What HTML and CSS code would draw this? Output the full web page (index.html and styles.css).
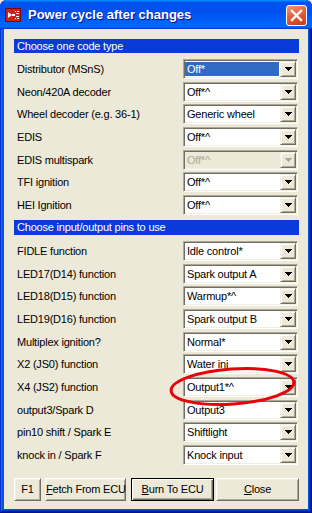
FILE: index.html
```html
<!DOCTYPE html>
<html lang="en">
<head>
    <meta charset="UTF-8">
    <meta name="viewport" content="width=device-width, initial-scale=1.0">
    <title>Power cycle after changes</title>
    <link rel="stylesheet" href="styles.css">
</head>
<body>

<div class="window">
    <div class="titlebar">
        <svg class="app-icon" width="16" height="16" viewBox="0 0 16 16">
            <rect x="0.5" y="1.5" width="15" height="13" fill="#c8231d" stroke="#6b0a06"/>
            <path d="M3 5l4 3-4 3z" fill="#fff"/>
            <path d="M7 7h3v2H7z M10 4h1v1h-1z M12 4h2v1h-2z M11 6h3v1h-3z M11 9h3v1h-3z M10 11h1v1h-1z M12 11h2v1h-2z" fill="#fff"/>
        </svg>
        <span class="title">Power cycle after changes</span>
        <div class="close-btn">
            <svg width="19" height="19" viewBox="0 0 19 19">
                <path d="M5 5l9 9M14 5l-9 9" stroke="#fff" stroke-width="2.4" stroke-linecap="square"/>
            </svg>
        </div>
    </div>

    <div class="client">
        <div class="section-head">Choose one code type</div>

        <div class="row">
            <span class="label">Distributor (MSnS)</span>
            <div class="combo focused"><span class="value">Off*</span><span class="drop"><svg width="7" height="4"><path d="M0 0h7v1H0zM1 1h5v1H1zM2 2h3v1H2zM3 3h1v1H3z"/></svg></span></div>
        </div>
        <div class="row">
            <span class="label">Neon/420A decoder</span>
            <div class="combo"><span class="value">Off*^</span><span class="drop"><svg width="7" height="4"><path d="M0 0h7v1H0zM1 1h5v1H1zM2 2h3v1H2zM3 3h1v1H3z"/></svg></span></div>
        </div>
        <div class="row">
            <span class="label">Wheel decoder (e.g. 36-1)</span>
            <div class="combo"><span class="value">Generic wheel</span><span class="drop"><svg width="7" height="4"><path d="M0 0h7v1H0zM1 1h5v1H1zM2 2h3v1H2zM3 3h1v1H3z"/></svg></span></div>
        </div>
        <div class="row">
            <span class="label">EDIS</span>
            <div class="combo"><span class="value">Off*^</span><span class="drop"><svg width="7" height="4"><path d="M0 0h7v1H0zM1 1h5v1H1zM2 2h3v1H2zM3 3h1v1H3z"/></svg></span></div>
        </div>
        <div class="row">
            <span class="label">EDIS multispark</span>
            <div class="combo disabled"><span class="value">Off*^</span><span class="drop"><svg width="7" height="4"><path d="M0 0h7v1H0zM1 1h5v1H1zM2 2h3v1H2zM3 3h1v1H3z"/></svg></span></div>
        </div>
        <div class="row">
            <span class="label">TFI ignition</span>
            <div class="combo"><span class="value">Off*^</span><span class="drop"><svg width="7" height="4"><path d="M0 0h7v1H0zM1 1h5v1H1zM2 2h3v1H2zM3 3h1v1H3z"/></svg></span></div>
        </div>
        <div class="row">
            <span class="label">HEI Ignition</span>
            <div class="combo"><span class="value">Off*^</span><span class="drop"><svg width="7" height="4"><path d="M0 0h7v1H0zM1 1h5v1H1zM2 2h3v1H2zM3 3h1v1H3z"/></svg></span></div>
        </div>

        <div class="section-head second">Choose input/output pins to use</div>

        <div class="row">
            <span class="label">FIDLE function</span>
            <div class="combo"><span class="value">Idle control*</span><span class="drop"><svg width="7" height="4"><path d="M0 0h7v1H0zM1 1h5v1H1zM2 2h3v1H2zM3 3h1v1H3z"/></svg></span></div>
        </div>
        <div class="row">
            <span class="label">LED17(D14) function</span>
            <div class="combo"><span class="value">Spark output A</span><span class="drop"><svg width="7" height="4"><path d="M0 0h7v1H0zM1 1h5v1H1zM2 2h3v1H2zM3 3h1v1H3z"/></svg></span></div>
        </div>
        <div class="row">
            <span class="label">LED18(D15) function</span>
            <div class="combo"><span class="value">Warmup*^</span><span class="drop"><svg width="7" height="4"><path d="M0 0h7v1H0zM1 1h5v1H1zM2 2h3v1H2zM3 3h1v1H3z"/></svg></span></div>
        </div>
        <div class="row">
            <span class="label">LED19(D16) function</span>
            <div class="combo"><span class="value">Spark output B</span><span class="drop"><svg width="7" height="4"><path d="M0 0h7v1H0zM1 1h5v1H1zM2 2h3v1H2zM3 3h1v1H3z"/></svg></span></div>
        </div>
        <div class="row">
            <span class="label">Multiplex ignition?</span>
            <div class="combo"><span class="value">Normal*</span><span class="drop"><svg width="7" height="4"><path d="M0 0h7v1H0zM1 1h5v1H1zM2 2h3v1H2zM3 3h1v1H3z"/></svg></span></div>
        </div>
        <div class="row">
            <span class="label">X2 (JS0) function</span>
            <div class="combo"><span class="value">Water inj</span><span class="drop"><svg width="7" height="4"><path d="M0 0h7v1H0zM1 1h5v1H1zM2 2h3v1H2zM3 3h1v1H3z"/></svg></span></div>
        </div>
        <div class="row">
            <span class="label">X4 (JS2) function</span>
            <div class="combo"><span class="value">Output1*^</span><span class="drop"><svg width="7" height="4"><path d="M0 0h7v1H0zM1 1h5v1H1zM2 2h3v1H2zM3 3h1v1H3z"/></svg></span></div>
        </div>
        <div class="row">
            <span class="label">output3/Spark D</span>
            <div class="combo"><span class="value">Output3</span><span class="drop"><svg width="7" height="4"><path d="M0 0h7v1H0zM1 1h5v1H1zM2 2h3v1H2zM3 3h1v1H3z"/></svg></span></div>
        </div>
        <div class="row">
            <span class="label">pin10 shift / Spark E</span>
            <div class="combo"><span class="value">Shiftlight</span><span class="drop"><svg width="7" height="4"><path d="M0 0h7v1H0zM1 1h5v1H1zM2 2h3v1H2zM3 3h1v1H3z"/></svg></span></div>
        </div>
        <div class="row">
            <span class="label">knock in / Spark F</span>
            <div class="combo"><span class="value">Knock input</span><span class="drop"><svg width="7" height="4"><path d="M0 0h7v1H0zM1 1h5v1H1zM2 2h3v1H2zM3 3h1v1H3z"/></svg></span></div>
        </div>

        <div class="buttons">
            <div class="btn btn-f1">F1</div>
            <div class="btn btn-fetch"><u>F</u>etch From ECU</div>
            <div class="btn btn-burn default"><u>B</u>urn To ECU</div>
            <div class="btn btn-close"><u>C</u>lose</div>
        </div>
    </div>

    <!-- red hand-drawn mark over the X4 combo -->
    <svg class="mark" width="134" height="50" viewBox="0 0 134 50">
        <ellipse cx="66.5" cy="24.5" rx="61.5" ry="17.5" fill="none" stroke="#e8000b" stroke-width="3" transform="rotate(-4 66.5 24.5)"/>
    </svg>
</div>

</body>
</html>
```

FILE: styles.css
```css
body {
    margin: 0;
    background-color: #f3e4e4;
    font-family: "Liberation Sans", Arial, sans-serif;
    font-size: 11px;
    letter-spacing: -0.2px;
    color: #000;
}

.window {
    position: relative;
    width: 312px;
    height: 513px;
    display: flex;
    flex-direction: column;
    background-color: #0054e3;
    border-radius: 7px 7px 0 0;
    box-shadow: inset -1px -1px #00138c, inset 1px 1px #0831d9, inset -2px -2px #001ea0, inset 2px 2px #166aee, inset -3px -3px #003bda, inset 3px 3px #0855dd;
}

.titlebar {
    height: 29px;
    display: flex;
    align-items: center;
    padding: 0 5px;
    border-radius: 7px 7px 0 0;
    background: linear-gradient(180deg, #0997ff, #0053ee 8%, #0050ee 40%, #06f 88%, #06f 93%, #005bff 95%, #003dd7 96%, #003dd7);
}

.app-icon {
    flex-shrink: 0;
}

.title {
    margin-left: 7px;
    color: #fff;
    font-weight: bold;
    font-size: 13px;
    letter-spacing: 0;
    text-shadow: 1px 1px #0f1089;
}

.close-btn {
    margin-left: auto;
    margin-top: 2px;
    width: 21px;
    height: 21px;
    box-sizing: border-box;
    border: 1px solid #fff;
    border-radius: 3px;
    background: linear-gradient(160deg, #f09a7e, #e2603c 45%, #c9391a);
    display: flex;
    align-items: center;
    justify-content: center;
}

.client {
    flex: 1;
    margin: 0 4px 4px;
    padding: 10px 9px 0 10px;
    background-color: #ece9d8;
}

.section-head {
    height: 14px;
    line-height: 14px;
    padding-left: 3px;
    margin-bottom: 6px;
    background-color: #0a3bd8;
    color: #fff;
}

.section-head.second {
    height: 15px;
    line-height: 15px;
    margin-top: 2px;
}

.row {
    display: flex;
    height: 22.7px;
}

.label {
    width: 169px;
    padding-left: 3px;
    box-sizing: border-box;
    line-height: 20px;
    white-space: nowrap;
}

.combo {
    width: 115px;
    height: 20px;
    box-sizing: border-box;
    display: flex;
    padding: 1px;
    background-color: #fff;
    border: 1px solid;
    border-color: #aca899 #fff #fff #aca899;
    box-shadow: inset 1px 1px #716f64, inset -1px -1px #f1efe2;
}

.value {
    flex: 1;
    padding-left: 2px;
    line-height: 16px;
    white-space: nowrap;
    overflow: hidden;
}

.combo.focused .value {
    margin: 1px 1px 1px 0;
    padding-left: 2px;
    line-height: 14px;
    background-color: #316ac5;
    color: #fff;
}

.combo.disabled {
    background-color: #ece9d8;
}

.combo.disabled .value {
    color: #aca899;
}

.drop {
    width: 16px;
    height: 16px;
    box-sizing: border-box;
    display: flex;
    align-items: center;
    justify-content: center;
    background-color: #ece9d8;
    border: 1px solid;
    border-color: #f1efe2 #716f64 #716f64 #f1efe2;
    box-shadow: inset 1px 1px #fff, inset -1px -1px #aca899;
}

.drop svg {
    fill: #000;
}

.combo.disabled .drop svg {
    fill: #aca899;
}

.buttons {
    display: flex;
    margin-top: 10px;
}

.btn {
    height: 23px;
    box-sizing: border-box;
    line-height: 21px;
    text-align: center;
    background-color: #ece9d8;
    border: 1px solid;
    border-color: #fff #716f64 #716f64 #fff;
    box-shadow: inset 1px 1px #f1efe2, inset -1px -1px #aca899;
    white-space: nowrap;
}

.btn.default {
    border-color: #000;
    box-shadow: inset 1px 1px #fff, inset -1px -1px #716f64, inset -2px -2px #aca899;
}

.btn-f1 {
    width: 27px;
    margin-right: 4px;
}

.btn-fetch {
    width: 81px;
    margin-right: 5px;
}

.btn-burn {
    width: 83px;
    margin-right: 2px;
}

.btn-close {
    width: 83px;
}

.mark {
    position: absolute;
    left: 166px;
    top: 362px;
}
```
